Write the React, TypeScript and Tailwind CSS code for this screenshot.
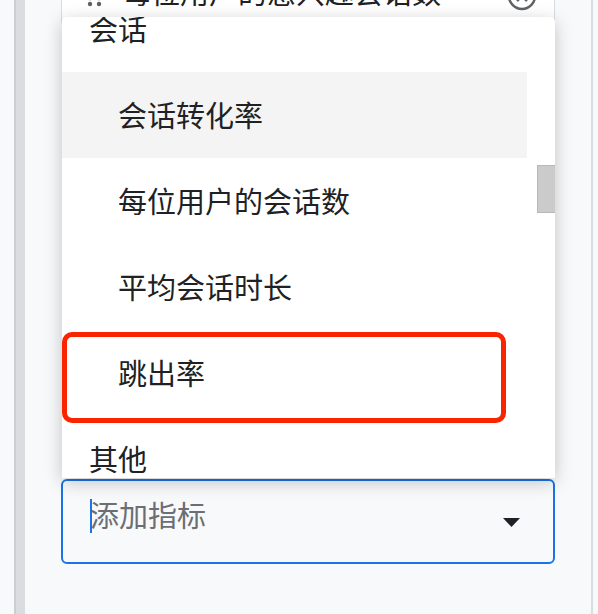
const sessionItems = ['会话转化率', '每位用户的会话数', '平均会话时长', '跳出率'];

function Grip() {
  return (
    <svg width="16" height="18" viewBox="0 0 16 18" className="shrink-0 text-[#5f6368]">
      {[3, 9, 15].map((y) =>
        [3, 12].map((x) => <circle key={`${x}-${y}`} cx={x} cy={y} r="2.2" fill="currentColor" />)
      )}
    </svg>
  );
}

export default function App() {
  return (
    <div className="w-[598px] h-[614px] overflow-hidden bg-[#f8f9fa] flex font-['Noto_Sans_CJK_SC','Noto_Sans',sans-serif] text-[#202124]">
      {/* left rail */}
      <div className="ml-[14px] w-[11px] shrink-0 bg-[#dadce0] border-l-2 border-[#cbcdd1]" />

      {/* main column */}
      <div className="flex-1 flex flex-col pl-[36px] pr-[36px]">
        {/* row behind the menu */}
        <div className="-mt-[45px] h-[72px] shrink-0 bg-white border border-[#dadce0] rounded-[6px] flex items-center pl-[25px] pr-[17px]">
          <div className="mt-[14px]">
            <Grip />
          </div>
          <span className="ml-[19px] text-[29px] leading-[34px]">每位用户的感兴趣会话数</span>
          <svg width="30" height="30" viewBox="0 0 30 30" className="ml-auto mt-[10px] text-[#5f6368]">
            <circle cx="15" cy="15" r="13" fill="none" stroke="currentColor" strokeWidth="2.5" />
            <path d="M10 10 L20 20 M20 10 L10 20" stroke="currentColor" strokeWidth="2.5" />
          </svg>
        </div>

        <div className="relative mt-auto mb-[50px]">
          {/* open menu */}
          <div className="absolute bottom-full left-[1px] right-0 mb-[1px] h-[461px] bg-white rounded-t-[5px] shadow-[0_4px_18px_rgba(0,0,0,0.22)] overflow-hidden">
            <div className="-mt-[31px] pr-[28px]">
              <div className="h-[86px] flex items-center pl-[27px] text-[29px]">会话</div>
              {sessionItems.map((item, i) => (
                <div
                  key={item}
                  className={`h-[86px] flex items-center pl-[56px] text-[29px] ${i === 0 ? 'bg-[#f4f4f4]' : ''}`}
                >
                  {item}
                </div>
              ))}
              <div className="h-[86px] flex items-center pl-[27px] text-[29px]">其他</div>
            </div>

            {/* scrollbar thumb */}
            <div className="absolute right-0 top-[148px] w-[18px] h-[48px] bg-[#cbcbcb] border border-r-0 border-[#b8b8b8]" />

            {/* annotation */}
            <div className="absolute left-0 top-[315px] w-[444px] h-[91px] border-[5px] border-[#f92400] rounded-[10px]" />
          </div>

          {/* input */}
          <div className="h-[85px] border-2 border-[#1a73e8] rounded-[6px] flex items-center pl-[27px] pr-[33px]">
            <div className="flex items-center mb-[16px]">
              <span className="w-[2px] h-[34px] bg-[#1a73e8] mt-[4px]" />
              <span className="-ml-[2px] text-[29px] leading-[34px] text-[#6b6e72]">添加指标</span>
            </div>
            <svg width="17" height="9" viewBox="0 0 17 9" className="ml-auto mt-[2px]">
              <polygon points="0,0 17,0 8.5,9" fill="#202124" />
            </svg>
          </div>
        </div>
      </div>

      {/* right divider */}
      <div className="w-[2px] shrink-0 bg-[#dadce0] mr-[5px]" />
    </div>
  );
}
